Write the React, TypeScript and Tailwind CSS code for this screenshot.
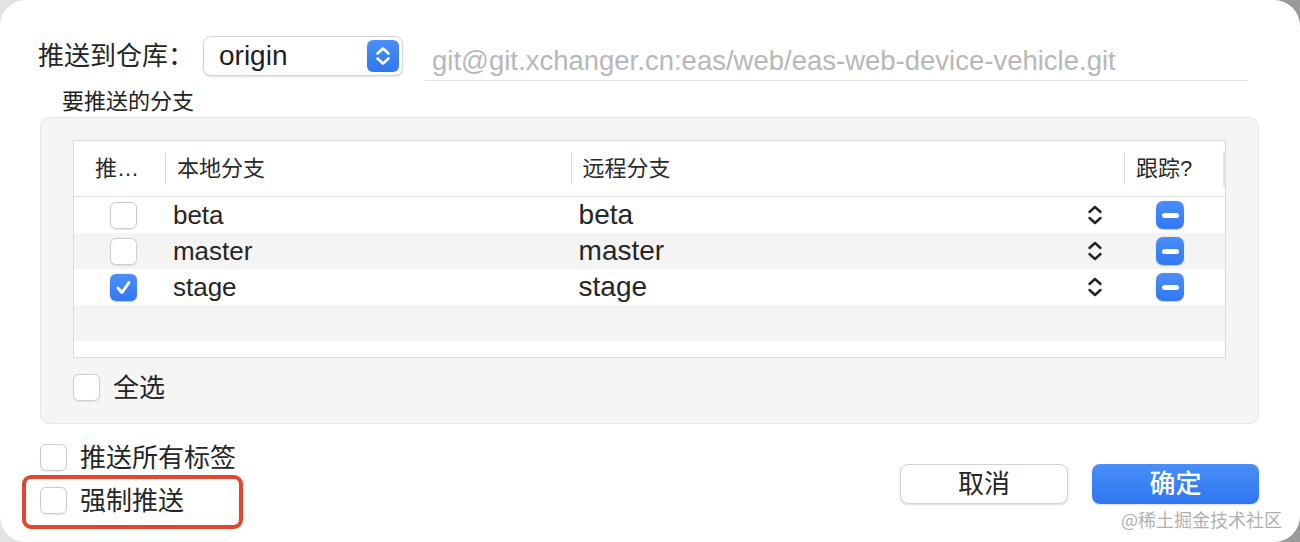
import React from "react";

const Checkbox = ({ checked = false }: { checked?: boolean }) =>
  checked ? (
    <div className="w-[27px] h-[27px] shrink-0 rounded-[6px] bg-linear-to-b from-[#4b8ff8] to-[#3178f2] flex items-center justify-center shadow-[0_0.5px_1.5px_rgba(0,0,0,0.25)]">
      <svg width="19" height="19" viewBox="0 0 19 19">
        <path d="M4 10 L8 14.5 L15 4.5" fill="none" stroke="white" strokeWidth="3" strokeLinecap="round" strokeLinejoin="round" />
      </svg>
    </div>
  ) : (
    <div className="w-[27px] h-[27px] shrink-0 rounded-[6px] bg-white border border-[#cdcdcd] shadow-[0_0.5px_1px_rgba(0,0,0,0.08)]" />
  );

const TableChevrons = () => (
  <svg width="16" height="22" viewBox="0 0 16 22">
    <path d="M2.5 8 L8 3 L13.5 8" fill="none" stroke="#222" strokeWidth="2.4" strokeLinecap="round" strokeLinejoin="round" />
    <path d="M2.5 14 L8 19 L13.5 14" fill="none" stroke="#222" strokeWidth="2.4" strokeLinecap="round" strokeLinejoin="round" />
  </svg>
);

const MinusButton = () => (
  <div className="w-[28px] h-[28px] rounded-[7px] bg-linear-to-b from-[#4a8ef8] to-[#3178f2] flex items-center justify-center shadow-[0_0.5px_1.5px_rgba(0,0,0,0.2)]">
    <div className="w-[17px] h-[5px] rounded-full bg-white" />
  </div>
);

const rows = [
  { name: "beta", checked: false },
  { name: "master", checked: false },
  { name: "stage", checked: true },
];

export default function App() {
  return (
    <div className="w-[1300px] h-[542px] bg-linear-to-r from-[#e3e3e3] to-[#9a9a9a] font-['Liberation_Sans','Noto_Sans_CJK_SC',sans-serif] text-[#262626]">
      <div className="relative w-full h-full bg-white rounded-[26px] overflow-hidden flex flex-col">
        {/* top row */}
        <div className="pt-[36px] pl-[38px] pr-[52px] flex items-start">
          <div className="h-[40px] w-[165px] flex items-center text-[26px] leading-none">推送到仓库：</div>
          <div className="w-[200px] h-[40px] rounded-[8px] bg-white border border-[#d4d4d4] shadow-[0_1px_2px_rgba(0,0,0,0.12)] flex items-center pl-[15px]">
            <span className="text-[28px] leading-none text-[#1f1f1f]">origin</span>
            <div className="ml-auto mr-[3px] w-[32px] h-[32px] rounded-[6px] bg-linear-to-b from-[#4b8ff8] to-[#2f76f1] flex items-center justify-center">
              <svg width="32" height="32" viewBox="0 0 32 32">
                <path d="M10.5 13.5 L16 8.5 L21.5 13.5" fill="none" stroke="white" strokeWidth="2.6" strokeLinecap="round" strokeLinejoin="round" />
                <path d="M10.5 18.5 L16 23.5 L21.5 18.5" fill="none" stroke="white" strokeWidth="2.6" strokeLinecap="round" strokeLinejoin="round" />
              </svg>
            </div>
          </div>
          <div className="ml-[22px] flex-1 h-[45px] border-b border-[#e2e2e2] flex items-end pb-[5px] pl-[7px] text-[27.5px] leading-[28px] text-[#b8b8b8]">
            git@git.xchanger.cn:eas/web/eas-web-device-vehicle.git
          </div>
        </div>

        {/* group title */}
        <div className="mt-[10px] ml-[62px] text-[22px] leading-[22px] text-[#222]">要推送的分支</div>

        {/* group box */}
        <div className="mt-[4px] ml-[40px] mr-[41px] h-[307px] rounded-[10px] bg-[#f5f5f5] border border-[#e6e6e6] pt-[22px] px-[32px]">
          <div className="h-[218px] bg-white border border-[#d9d9d9] flex flex-col">
            {/* header */}
            <div className="h-[56px] shrink-0 border-b border-[#e0e0e0] flex items-center text-[22px] leading-none text-[#2a2a2a]">
              <div className="w-[91px] pl-[21px]">推…</div>
              <div className="w-px h-[32px] bg-[#d6d6d6]" />
              <div className="w-[405px] pl-[11px]">本地分支</div>
              <div className="w-px h-[32px] bg-[#d6d6d6]" />
              <div className="w-[553px] pl-[11px]">远程分支</div>
              <div className="w-px h-[32px] bg-[#d6d6d6]" />
              <div className="w-[98px] pl-[11px]">跟踪?</div>
              <div className="w-[2px] h-[36px] bg-[#e4e4e4]" />
            </div>
            {/* rows */}
            {rows.map((r, i) => (
              <div key={r.name} className={`h-[36px] shrink-0 flex items-center ${i % 2 === 1 ? "bg-[#f4f4f5]" : "bg-white"}`}>
                <div className="w-[91px] pl-[36px] flex items-center">
                  <Checkbox checked={r.checked} />
                </div>
                <div className="w-[406px] pl-[8px] text-[26px] leading-none">{r.name}</div>
                <div className="w-[554px] pl-[8px] pr-[21px] flex items-center">
                  <span className="text-[28px] leading-none">{r.name}</span>
                  <div className="ml-auto flex items-center">
                    <TableChevrons />
                  </div>
                </div>
                <div className="w-[101px] pl-[32px] flex items-center">
                  <MinusButton />
                </div>
              </div>
            ))}
            <div className="h-[36px] shrink-0 bg-[#f4f4f5]" />
            <div className="flex-1 bg-white" />
          </div>
          {/* select all */}
          <div className="mt-[16px] flex items-center gap-[13px]">
            <Checkbox />
            <span className="text-[26px] leading-none">全选</span>
          </div>
        </div>

        {/* bottom */}
        <div className="mt-[20px] ml-[40px] mr-[41px] flex justify-between items-start">
          <div className="flex flex-col gap-[16px]">
            <div className="flex items-center gap-[13px] h-[27px]">
              <Checkbox />
              <span className="text-[26px] leading-none">推送所有标签</span>
            </div>
            <div className="relative flex items-center gap-[13px] h-[27px]">
              <Checkbox />
              <span className="text-[26px] leading-none">强制推送</span>
              <div className="absolute -left-[18px] -top-[12px] w-[221px] h-[54px] border-[4px] border-[#e3452f] rounded-[9px]" />
            </div>
          </div>
          <div className="mt-[20px] flex gap-[24px]">
            <button className="w-[168px] h-[40px] rounded-[8px] bg-white border border-[#d2d2d2] shadow-[0_1px_2px_rgba(0,0,0,0.15)] flex items-center justify-center text-[26px] leading-none text-[#262626]">
              取消
            </button>
            <button className="w-[167px] h-[40px] rounded-[8px] bg-linear-to-b from-[#4a8ef8] to-[#2f76f1] shadow-[0_1px_2px_rgba(0,0,0,0.15)] flex items-center justify-center text-[26px] leading-none text-white font-medium">
              确定
            </button>
          </div>
        </div>

        {/* watermark */}
        <div className="absolute right-[18px] bottom-[14px] text-[18px] leading-none text-[#b0b0b0] font-['Noto_Sans_CJK_SC',sans-serif]">
          @稀土掘金技术社区
        </div>
      </div>
    </div>
  );
}
